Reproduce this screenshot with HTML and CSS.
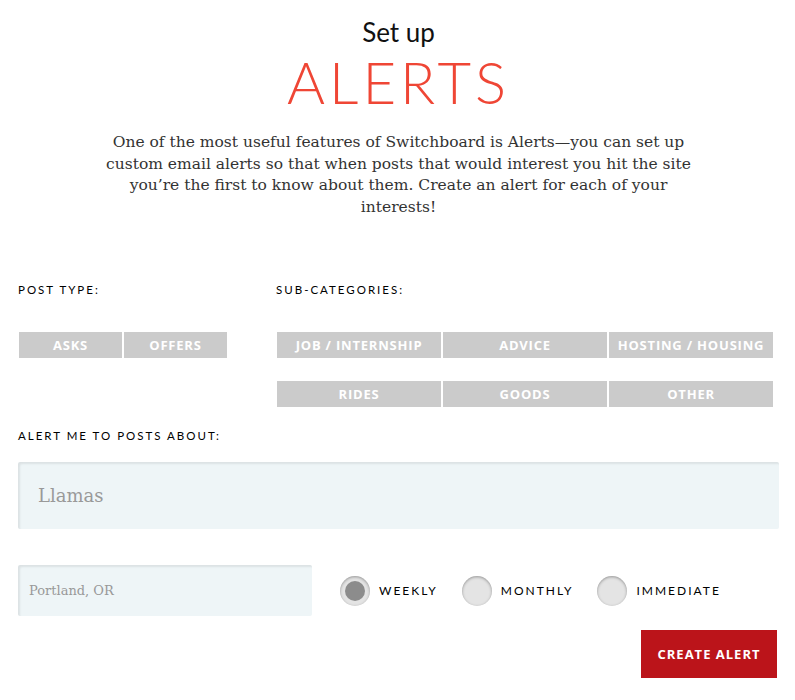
FILE: index.html
```html
<!DOCTYPE html>
<html lang="en">
<head>
  <meta charset="UTF-8">
  <meta name="viewport" content="width=device-width, initial-scale=1">
  <title>Set up Alerts</title>
  <link rel="stylesheet" href="styles.css">
</head>
<body>
  <main class="page">
    <header class="intro">
      <h2 class="intro-kicker">Set up</h2>
      <h1 class="intro-title">ALERTS</h1>
      <p class="intro-text">One of the most useful features of Switchboard is Alerts—you can set up custom email alerts so that when posts that would interest you hit the site you’re the first to know about them. Create an alert for each of your interests!</p>
    </header>

    <form class="alert-form">
      <div class="filters">
        <section class="filter">
          <h3 class="label">Post type:</h3>
          <div class="chips chips-type">
            <button type="button" class="chip">Asks</button>
            <button type="button" class="chip">Offers</button>
          </div>
        </section>
        <section class="filter">
          <h3 class="label">Sub-categories:</h3>
          <div class="chips chips-sub">
            <button type="button" class="chip">Job / Internship</button>
            <button type="button" class="chip">Advice</button>
            <button type="button" class="chip">Hosting / Housing</button>
            <button type="button" class="chip">Rides</button>
            <button type="button" class="chip">Goods</button>
            <button type="button" class="chip">Other</button>
          </div>
        </section>
      </div>

      <h3 class="label label-about">Alert me to posts about:</h3>
      <input class="field field-big" type="text" placeholder="Llamas">

      <div class="options">
        <input class="field field-small" type="text" placeholder="Portland, OR">
        <div class="freq">
          <label class="radio"><input type="radio" name="freq" checked><span class="dot"></span>Weekly</label>
          <label class="radio"><input type="radio" name="freq"><span class="dot"></span>Monthly</label>
          <label class="radio"><input type="radio" name="freq"><span class="dot"></span>Immediate</label>
        </div>
      </div>

      <div class="actions">
        <button type="submit" class="submit">Create alert</button>
      </div>
    </form>
  </main>
</body>
</html>
```

FILE: styles.css
```css
:root {
  --red: #ef4635;
  --dark-red: #bb141a;
  --chip: #cbcbcb;
  --field: #eef5f7;
  --text: #222;
  --muted: #999;
}

* {
  box-sizing: border-box;
}

body {
  margin: 0;
  background: #fff;
  color: var(--text);
  font-family: 'Lato', 'Open Sans', sans-serif;
}

.page {
  padding: 16px 16px 20px 18px;
}

.intro {
  text-align: center;
}

.intro-kicker {
  margin: 0;
  font-size: 26px;
  font-weight: 400;
  line-height: 32px;
  color: #111;
}

.intro-title {
  margin: 6px 0 0;
  font-size: 58px;
  font-weight: 300;
  letter-spacing: 4px;
  line-height: 56px;
  color: var(--red);
}

.intro-text {
  width: 585px;
  margin: 22px auto 0;
  font-family: 'DejaVu Serif', serif;
  font-size: 15.5px;
  line-height: 21.6px;
  color: #333;
}

.alert-form {
  margin-top: 65px;
}

.filters {
  display: grid;
  grid-template-columns: 258px 1fr;
}

.label {
  margin: 0;
  font-size: 11.5px;
  font-weight: 400;
  letter-spacing: 2px;
  text-transform: uppercase;
  color: #000;
}

.chips {
  display: grid;
  gap: 23px 2px;
  margin-top: 36px;
}

.chips-type {
  grid-template-columns: repeat(2, 103px);
  padding-left: 1px;
}

.chips-sub {
  grid-template-columns: repeat(3, 164px);
  padding-left: 1px;
}

.chip {
  height: 26px;
  padding: 0;
  border: none;
  background: var(--chip);
  color: #fff;
  font-family: 'Open Sans', sans-serif;
  font-size: 13px;
  font-weight: 700;
  letter-spacing: 0.8px;
  text-transform: uppercase;
  cursor: pointer;
}

.label-about {
  margin-top: 22px;
}

.field {
  display: block;
  border: none;
  border-radius: 2px;
  background: var(--field);
  box-shadow: inset 2px 2px 2px rgba(0, 0, 0, 0.08);
  font-family: 'DejaVu Serif', serif;
  color: var(--text);
}

.field::placeholder {
  color: var(--muted);
}

.field-big {
  width: 761px;
  height: 67px;
  margin-top: 20px;
  padding: 0 20px;
  font-size: 18px;
}

.field-small {
  width: 294px;
  height: 51px;
  padding: 0 11px;
  font-size: 13px;
}

.options {
  display: flex;
  align-items: center;
  gap: 28px;
  margin-top: 36px;
}

.freq {
  display: flex;
  gap: 24px;
}

.radio {
  display: flex;
  align-items: center;
  gap: 9px;
  font-size: 12px;
  font-weight: 400;
  letter-spacing: 2px;
  text-transform: uppercase;
  color: #000;
  cursor: pointer;
}

.radio input {
  display: none;
}

.dot {
  width: 30px;
  height: 30px;
  border-radius: 50%;
  background: #e4e4e4;
  box-shadow: inset 0 1px 3px rgba(0, 0, 0, 0.35);
  position: relative;
}

.radio input:checked + .dot::after {
  content: '';
  position: absolute;
  inset: 5px;
  border-radius: 50%;
  background: #8c8c8c;
}

.actions {
  display: flex;
  justify-content: flex-end;
  margin-top: 14px;
  padding-right: 2px;
}

.submit {
  width: 136px;
  height: 48px;
  border: none;
  background: var(--dark-red);
  color: #fff;
  font-family: 'Open Sans', sans-serif;
  font-size: 13px;
  font-weight: 700;
  letter-spacing: 1px;
  text-transform: uppercase;
  cursor: pointer;
}
```
